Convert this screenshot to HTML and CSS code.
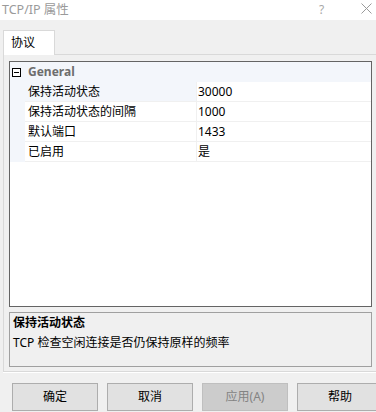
FILE: index.html
```html
<!DOCTYPE html>
<html lang="zh-CN">
<head>
<meta charset="utf-8">
<title>TCP/IP 属性</title>
<link rel="stylesheet" href="styles.css">
</head>
<body>
<div class="dialog">
  <div class="titlebar">
    <span class="title">TCP/IP 属性</span>
    <span class="help">?</span>
    <svg class="close" width="11" height="11" viewBox="0 0 11 11"><path d="M0.5 0.5 L10.5 10.5 M10.5 0.5 L0.5 10.5" stroke="#9a9a9a" stroke-width="1" fill="none"/></svg>
  </div>
  <div class="tabs">
    <div class="tab">协议</div>
  </div>
  <div class="page">
    <div class="grid">
      <div class="cat">
        <span class="expander"><svg width="9" height="9" viewBox="0 0 9 9"><rect x="0.5" y="0.5" width="8" height="8" fill="#fff" stroke="#000"/><path d="M2 4.5 H7" stroke="#000"/></svg></span>
        <span class="cat-name">General</span>
      </div>
      <div class="row selected"><span class="gutter"></span><span class="name">保持活动状态</span><span class="value">30000</span></div>
      <div class="row"><span class="gutter"></span><span class="name">保持活动状态的间隔</span><span class="value">1000</span></div>
      <div class="row"><span class="gutter"></span><span class="name">默认端口</span><span class="value">1433</span></div>
      <div class="row"><span class="gutter"></span><span class="name">已启用</span><span class="value">是</span></div>
    </div>
    <div class="desc">
      <div class="desc-title">保持活动状态</div>
      <div class="desc-text">TCP 检查空闲连接是否仍保持原样的频率</div>
    </div>
  </div>
  <div class="buttons">
    <div class="btn">确定</div>
    <div class="btn">取消</div>
    <div class="btn disabled">应用(A)</div>
    <div class="btn">帮助</div>
  </div>
</div>
</body>
</html>
```
FILE: styles.css
```css
html, body {
  margin: 0;
  padding: 0;
}
body {
  width: 376px;
  height: 412px;
  overflow: hidden;
  background: #f0f0f0;
  font-family: "Noto Sans", "Noto Sans CJK SC", sans-serif;
  font-size: 12px;
  color: #000;
}
.dialog {
  width: 376px;
  height: 412px;
  overflow: hidden;
}
.titlebar {
  height: 20px;
  background: #fff;
  display: flex;
  align-items: center;
  padding-left: 2px;
}
.title {
  color: #9a9a9a;
  font-size: 12.5px;
  line-height: 16px;
  flex: 1;
}
.help {
  color: #a8a8a8;
  font-size: 12px;
  line-height: 16px;
  width: 42px;
}
.close {
  margin-right: 4px;
  margin-top: -4px;
}
.tabs {
  height: 34px;
  padding-top: 10px;
  box-sizing: border-box;
  display: flex;
  padding-left: 3px;
}
.tab {
  width: 52px;
  height: 25px;
  box-sizing: border-box;
  border: 1px solid #d9d9d9;
  border-bottom: none;
  background: #fff;
  padding-left: 7px;
  line-height: 24px;
  margin-bottom: -1px;
  position: relative;
  z-index: 1;
}
.page {
  margin-left: 3px;
  width: 375px;
  box-sizing: border-box;
  border: 1px solid #d9d9d9;
  padding: 6px 0 4px 5px;
  box-shadow: 0 1px 0 #fff;
}
.grid {
  width: 363px;
  height: 246px;
  box-sizing: border-box;
  border: 1px solid #646464;
  background: #fff;
}
.cat {
  height: 20px;
  background: #f3f6fb;
  display: flex;
  align-items: center;
}
.expander {
  width: 18px;
  height: 9px;
  padding-left: 2px;
  box-sizing: border-box;
  display: flex;
}
.cat-name {
  font-weight: bold;
  color: #6d6d6d;
  line-height: 16px;
}
.row {
  height: 20px;
  display: flex;
}
.gutter {
  width: 15px;
  background: #f3f6fb;
  flex: none;
}
.name {
  width: 172px;
  flex: none;
  padding-left: 3px;
  box-sizing: border-box;
  border-bottom: 1px solid #f0f0f0;
  border-right: 1px solid #f0f0f0;
  line-height: 19px;
}
.value {
  flex: 1;
  padding-left: 1px;
  border-bottom: 1px solid #f0f0f0;
  line-height: 19px;
}
.selected .name {
  background: #f3f6fb;
}
.desc {
  margin-top: 5px;
  width: 363px;
  height: 55px;
  box-sizing: border-box;
  border: 1px solid #a0a0a0;
  background: #f0f0f0;
  padding: 2px 0 0 3px;
}
.desc-title {
  font-weight: bold;
  line-height: 16px;
}
.desc-text {
  margin-top: 4px;
  line-height: 16px;
}
.buttons {
  display: flex;
  gap: 9px;
  margin-top: 11px;
  padding-left: 12px;
}
.btn {
  flex: none;
  width: 86px;
  height: 28px;
  box-sizing: border-box;
  border: 1px solid #adadad;
  background: #e1e1e1;
  display: flex;
  align-items: center;
  justify-content: center;
  line-height: 16px;
}
.btn.disabled {
  background: #cccccc;
  border-color: #bfbfbf;
  color: #838383;
}
```
